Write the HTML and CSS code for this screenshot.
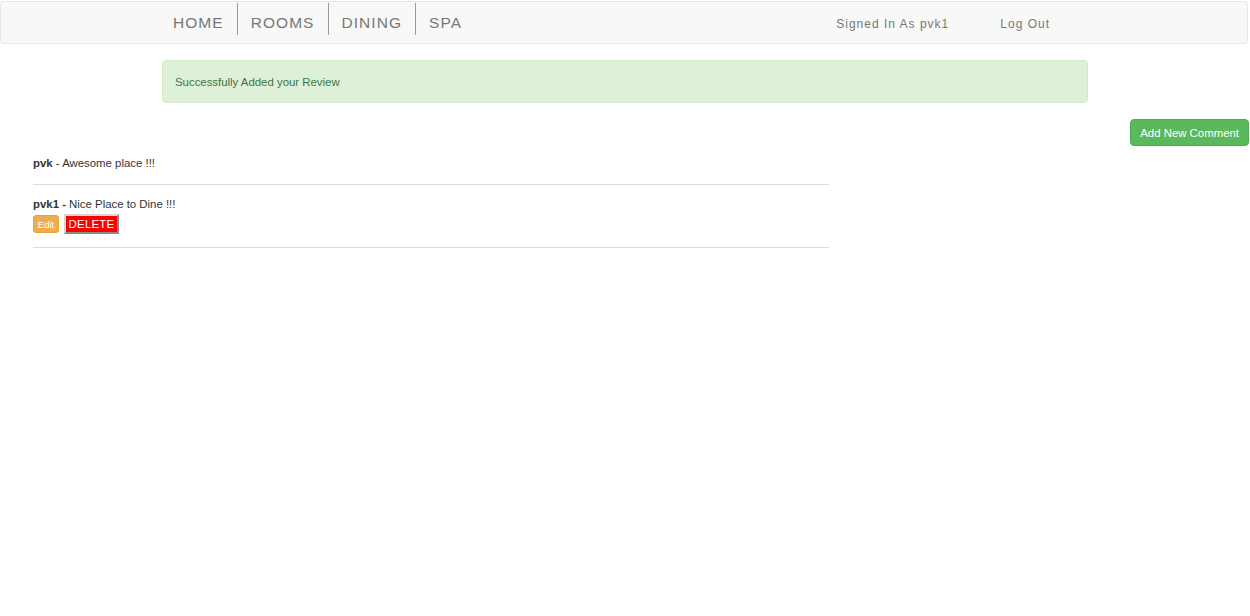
FILE: index.html
```html
<!DOCTYPE html>
<html>
<head>
<meta charset="utf-8">
<link rel="stylesheet" href="styles.css">
</head>
<body>
<nav class="navbar">
  <ul class="nav-links">
    <li class="nav-item">HOME</li>
    <li class="nav-item">ROOMS</li>
    <li class="nav-item">DINING</li>
    <li class="nav-item">SPA</li>
  </ul>
  <div class="nav-right">
    <span class="nav-user">Signed In As pvk1</span>
    <span class="nav-logout">Log Out</span>
  </div>
</nav>
<div class="alert">Successfully Added your Review</div>
<div class="toolbar">
  <button class="btn-add">Add New Comment</button>
</div>
<div class="comments">
  <div class="comment">
    <div class="comment-text"><b>pvk</b> - Awesome place !!!</div>
  </div>
  <div class="comment">
    <div class="comment-text"><b>pvk1 -</b> Nice Place to Dine !!!</div>
    <div class="actions">
      <button class="btn-edit">Edit</button>
      <button class="btn-delete">DELETE</button>
    </div>
  </div>
</div>
</body>
</html>
```
FILE: styles.css
```css
* { box-sizing: border-box; }
body {
  margin: 0;
  font-family: "Liberation Sans", Arial, sans-serif;
  color: #333;
  background: #fff;
}
.navbar {
  margin: 1px 2px 0 0;
  height: 43px;
  background: #f8f8f8;
  border: 1px solid #e7e7e7;
  border-radius: 4px;
  display: flex;
  align-items: flex-start;
}
.nav-links {
  list-style: none;
  margin: 0;
  padding: 1px 0 0 159px;
  display: flex;
}
.nav-item {
  height: 32px;
  padding: 10px 13px 0 13px;
  line-height: 20px;
  font-size: 15.5px;
  letter-spacing: 1.05px;
  color: #777;
  border-left: 1px solid #999;
}
.nav-item:first-child { border-left: none; }
.nav-right {
  margin-left: auto;
  margin-right: 197px;
  display: flex;
  gap: 51px;
  padding-top: 14px;
  font-size: 12px;
  letter-spacing: 1px;
  color: #777;
  line-height: 16px;
}
.alert {
  width: 926px;
  margin: 16px auto 0 auto;
  height: 43px;
  padding: 0 12px;
  display: flex;
  align-items: center;
  background: #dff0d8;
  border: 1px solid #d6e9c6;
  border-radius: 4px;
  color: #3c763d;
  font-size: 11.4px;
}
.toolbar {
  display: flex;
  justify-content: flex-end;
  margin-top: 16px;
  padding-right: 1px;
}
.btn-add {
  height: 27px;
  padding: 0 9px;
  background: #5cb85c;
  border: 1px solid #4cae4c;
  border-radius: 4px;
  color: #fff;
  font-family: "Liberation Sans", Arial, sans-serif;
  font-size: 11.4px;
}
.comments {
  width: 796px;
  margin: 9px 0 0 33px;
}
.comment {
  border-bottom: 1px solid #ddd;
  padding: 11px 0 13px 0;
}
.comment:first-child { padding-top: 0; padding-bottom: 12px; }
.comment-text {
  font-size: 11.4px;
  line-height: 17px;
}
.actions {
  display: flex;
  align-items: center;
  gap: 5px;
  margin-top: 1px;
}
.btn-edit {
  height: 18px;
  width: 26px;
  padding: 0;
  background: #f0ad4e;
  border: 1px solid #eea236;
  border-radius: 3px;
  color: #fff;
  font-family: "Liberation Sans", Arial, sans-serif;
  font-size: 9.5px;
}
.btn-delete {
  height: 20px;
  width: 55px;
  padding: 0;
  background: #f00;
  border: 2px solid;
  border-color: #d8d8d8 #8a8a8a #8a8a8a #d8d8d8;
  color: #fff;
  font-family: "Liberation Sans", Arial, sans-serif;
  font-size: 11.5px;
  letter-spacing: 0.2px;
}
```
